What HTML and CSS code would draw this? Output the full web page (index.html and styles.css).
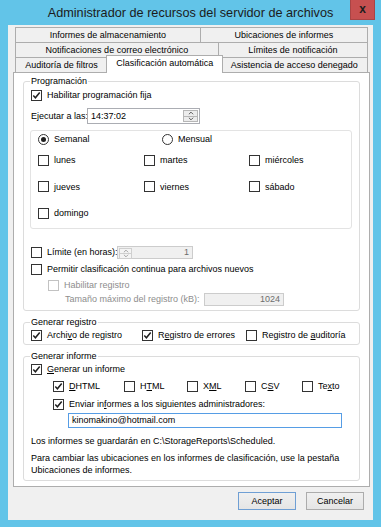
FILE: index.html
```html
<!DOCTYPE html>
<html lang="es">
<head>
  <meta charset="UTF-8">
  <meta name="viewport" content="width=device-width, initial-scale=1.0">
  <title>Administrador de recursos del servidor de archivos</title>
  <link rel="stylesheet" href="styles.css">
</head>
<body>

  <div class="window">
    <div class="titlebar">
      <span class="title">Administrador de recursos del servidor de archivos</span>
      <button class="close-btn" aria-label="Cerrar">x</button>
    </div>

    <div class="client">

      <!-- Tabs -->
      <div class="tabs">
        <div class="tab-row">
          <div class="tab">Informes de almacenamiento</div>
          <div class="tab">Ubicaciones de informes</div>
        </div>
        <div class="tab-row">
          <div class="tab">Notificaciones de correo electrónico</div>
          <div class="tab">Límites de notificación</div>
        </div>
        <div class="tab-row">
          <div class="tab">Auditoría de filtros</div>
          <div class="tab active">Clasificación automática</div>
          <div class="tab">Asistencia de acceso denegado</div>
        </div>
      </div>

      <div class="panel">

        <!-- Programación -->
        <fieldset class="group">
          <legend>Programación</legend>

          <label class="row row-enable">
            <span class="cb on"><svg viewBox="0 0 9 9"><path d="M1.3 4.6l2.1 2.2 4.3-5.3"/></svg></span>
            <span>Habilitar programación fija</span>
          </label>

          <div class="row row-time">
            <span class="time-label">Ejecutar a las:</span>
            <div class="spin time">
              <span class="spin-value">14:37:02</span>
              <span class="spin-btns">
                <span><svg viewBox="0 0 7 4"><path d="M1 3.5l2.5-2.5 2.5 2.5"/></svg></span>
                <span><svg viewBox="0 0 7 4"><path d="M1 .5l2.5 2.5 2.5-2.5"/></svg></span>
              </span>
            </div>
          </div>

          <div class="days-box">
            <div class="row radio-row">
              <label class="radio-item"><span class="rb on"></span><span>Semanal</span></label>
              <label class="radio-item"><span class="rb"></span><span>Mensual</span></label>
            </div>
            <div class="days">
              <label class="row"><span class="cb"></span><span>lunes</span></label>
              <label class="row"><span class="cb"></span><span>martes</span></label>
              <label class="row"><span class="cb"></span><span>miércoles</span></label>
              <label class="row"><span class="cb"></span><span>jueves</span></label>
              <label class="row"><span class="cb"></span><span>viernes</span></label>
              <label class="row"><span class="cb"></span><span>sábado</span></label>
              <label class="row"><span class="cb"></span><span>domingo</span></label>
            </div>
          </div>

          <div class="row row-limit">
            <span class="cb"></span>
            <span class="limit-label">Límite (en horas):</span>
            <div class="spin limit disabled">
              <span class="spin-btns">
                <span><svg viewBox="0 0 7 4"><path d="M1 3.5l2.5-2.5 2.5 2.5"/></svg></span>
                <span><svg viewBox="0 0 7 4"><path d="M1 .5l2.5 2.5 2.5-2.5"/></svg></span>
              </span>
              <span class="spin-value num">1</span>
            </div>
          </div>

          <label class="row row-continuous">
            <span class="cb"></span>
            <span>Permitir clasificación continua para archivos nuevos</span>
          </label>

          <label class="row row-log disabled-text">
            <span class="cb off"></span>
            <span>Habilitar registro</span>
          </label>

          <div class="row row-size disabled-text">
            <span class="size-label">Tamaño máximo del registro (kB):</span>
            <span class="textbox size">1024</span>
          </div>
        </fieldset>

        <!-- Generar registro -->
        <fieldset class="group group-log">
          <legend>Generar registro</legend>
          <div class="row log-row">
            <label class="log-item"><span class="cb on"><svg viewBox="0 0 9 9"><path d="M1.3 4.6l2.1 2.2 4.3-5.3"/></svg></span><span>Archi<u>v</u>o de registro</span></label>
            <label class="log-item"><span class="cb on"><svg viewBox="0 0 9 9"><path d="M1.3 4.6l2.1 2.2 4.3-5.3"/></svg></span><span>R<u>e</u>gistro de errores</span></label>
            <label class="log-item"><span class="cb"></span><span>Registro de <u>a</u>uditoría</span></label>
          </div>
        </fieldset>

        <!-- Generar informe -->
        <fieldset class="group">
          <legend>Generar informe</legend>

          <label class="row row-report">
            <span class="cb on"><svg viewBox="0 0 9 9"><path d="M1.3 4.6l2.1 2.2 4.3-5.3"/></svg></span>
            <span><u>G</u>enerar un informe</span>
          </label>

          <div class="row formats">
            <label class="fmt fmt-dhtml"><span class="cb on"><svg viewBox="0 0 9 9"><path d="M1.3 4.6l2.1 2.2 4.3-5.3"/></svg></span><span><u>D</u>HTML</span></label>
            <label class="fmt fmt-html"><span class="cb"></span><span>H<u>T</u>ML</span></label>
            <label class="fmt fmt-xml"><span class="cb"></span><span>X<u>M</u>L</span></label>
            <label class="fmt fmt-csv"><span class="cb"></span><span>C<u>S</u>V</span></label>
            <label class="fmt"><span class="cb"></span><span>Te<u>x</u>to</span></label>
          </div>

          <label class="row row-send">
            <span class="cb on"><svg viewBox="0 0 9 9"><path d="M1.3 4.6l2.1 2.2 4.3-5.3"/></svg></span>
            <span>Enviar in<u>f</u>ormes a los siguientes administradores:</span>
          </label>

          <div class="textbox email">kinomakino@hotmail.com</div>

          <p class="note note-path">Los informes se guardarán en C:\StorageReports\Scheduled.</p>
          <p class="note">Para cambiar las ubicaciones en los informes de clasificación, use la pestaña Ubicaciones de informes.</p>
        </fieldset>

      </div>

      <div class="buttons">
        <button class="btn default">Aceptar</button>
        <button class="btn">Cancelar</button>
      </div>

    </div>
  </div>

</body>
</html>
```

FILE: styles.css
```css
:root {
  --frame-color: #62c4e8;
  --face-color: #f0f0f0;
  --tab-border: #adadad;
  --group-border: #dcdcdc;
  --box-border: #abadb3;
  --disabled-text: #8d8d8d;
}

* {
  box-sizing: border-box;
}

body {
  margin: 0;
  font-family: "Liberation Sans", Arial, sans-serif;
  font-size: 9px;
  color: #000;
}

.window {
  width: 381px;
  height: 527px;
  background: var(--frame-color);
  padding: 0 8px 7px;
  display: flex;
  flex-direction: column;
  overflow: hidden;
}

/* Title bar */
.titlebar {
  flex: none;
  height: 25px;
  position: relative;
  display: flex;
  align-items: center;
  justify-content: center;
}

.title {
  font-size: 12.7px;
  color: #1b1b1b;
  margin-top: 1px;
}

.close-btn {
  position: absolute;
  top: 0;
  right: -2px;
  width: 25px;
  height: 20px;
  padding: 0;
  background: #c75050;
  border: 1px solid #a94444;
  border-top: none;
  color: #1e1e1e;
  font: bold 12px "Liberation Sans", Arial, sans-serif;
  line-height: 17px;
}

/* Client area */
.client {
  flex: 1;
  min-height: 0;
  background: var(--face-color);
  padding: 2px 3px 9px 5px;
  display: flex;
  flex-direction: column;
}

.tabs {
  flex: none;
  margin: 0 2px;
}

.tab-row {
  display: flex;
  height: 15px;
  align-items: flex-end;
}

.tab {
  flex: 1 1 auto;
  height: 15px;
  border: 1px solid var(--tab-border);
  border-bottom: none;
  margin-left: -1px;
  background: var(--face-color);
  text-align: center;
  line-height: 14px;
  white-space: nowrap;
}

.tab:first-child {
  margin-left: 0;
}

.tab.active {
  position: relative;
  z-index: 1;
  height: 18px;
  margin: 0 -2px -1px;
  background: #fff;
  line-height: 14px;
  padding-bottom: 4px;
}

.panel {
  flex: none;
  background: #fff;
  border: 1px solid var(--tab-border);
  padding: 2px 9px 5px;
}

/* Group boxes */
.group {
  border: 1px solid var(--group-border);
  border-radius: 3px;
  margin: 0;
  padding: 0 7px 4px;
  min-width: 0;
}

.group + .group {
  margin-top: 5px;
}

.group-log {
  padding-bottom: 2px;
}

.group legend {
  padding: 0 1px;
  margin-left: -1px;
  line-height: 12px;
}

.row {
  display: flex;
  align-items: center;
  height: 14px;
  white-space: nowrap;
}

/* Check boxes and radio buttons */
.cb {
  flex: none;
  width: 11px;
  height: 11px;
  border: 1px solid #333;
  background: #fff;
  margin-right: 5px;
  display: inline-flex;
  align-items: center;
  justify-content: center;
}

.cb svg {
  width: 9px;
  height: 9px;
  fill: none;
  stroke: #1f1f1f;
  stroke-width: 1.5;
}

.cb.off {
  border-color: #c2c2c2;
}

.rb {
  flex: none;
  width: 11px;
  height: 11px;
  border: 1px solid #333;
  border-radius: 50%;
  background: #fff;
  margin-right: 5px;
  display: inline-flex;
  align-items: center;
  justify-content: center;
}

.rb.on::after {
  content: "";
  width: 5px;
  height: 5px;
  border-radius: 50%;
  background: #1f1f1f;
}

label {
  display: flex;
  align-items: center;
}

/* Programación rows */
.row-enable {
  margin-top: 1px;
}

.row-time {
  margin-top: 6px;
  height: 16px;
}

.time-label {
  width: 56px;
}

.spin {
  display: flex;
  border: 1px solid var(--box-border);
  background: #fff;
}

.spin.time {
  width: 113px;
  height: 16px;
}

.spin-value {
  flex: 1;
  padding-left: 3px;
  line-height: 14px;
}

.spin-value.num {
  text-align: right;
  padding-right: 3px;
  line-height: 11px;
}

.spin-btns {
  flex: none;
  width: 17px;
  padding: 1px;
  display: flex;
  flex-direction: column;
}

.spin-btns span {
  flex: 1;
  border: 1px solid #b6b6b6;
  background: #ececec;
  display: flex;
  align-items: center;
  justify-content: center;
}

.spin-btns span + span {
  margin-top: -1px;
}

.spin-btns svg {
  width: 6px;
  height: 4px;
  fill: none;
  stroke: #444;
  stroke-width: 1;
}

.days-box {
  margin: 6px 0 0 -1px;
  border: 1px solid #e3e3e3;
  border-radius: 3px;
  padding: 1px 7px 8px;
}

.radio-item {
  width: 124px;
}

.days {
  margin-top: 7px;
  display: grid;
  grid-template-columns: 106px 105px 1fr;
  row-gap: 12.5px;
}

.row-limit {
  margin-top: 16px;
}

.limit-label {
  width: 70px;
}

.spin.limit {
  width: 76px;
  height: 13px;
  border-color: #cccccc;
  background: #f0f0f0;
  color: #6d6d6d;
}

.spin.limit .spin-btns {
  width: 15px;
}

.spin.limit .spin-btns span {
  border-color: #cfcfcf;
  background: #f4f4f4;
}

.spin.limit .spin-btns svg {
  stroke: #9a9a9a;
}

.row-continuous {
  margin-top: 3px;
}

.row-log {
  margin-top: 2px;
  padding-left: 17px;
}

.disabled-text {
  color: var(--disabled-text);
}

.row-size {
  padding-left: 34px;
}

.size-label {
  width: 139px;
}

.textbox {
  border: 1px solid var(--box-border);
  background: #fff;
  padding: 0 3px;
}

.textbox.size {
  width: 80px;
  height: 13px;
  line-height: 11px;
  text-align: right;
  border-color: #cccccc;
  background: #f0f0f0;
  color: #6d6d6d;
}

/* Generar registro */
.log-item:nth-child(1) {
  width: 111px;
}

.log-item:nth-child(2) {
  width: 104px;
}

/* Generar informe */
.formats {
  margin-top: 3px;
  padding-left: 22px;
}

.fmt-dhtml {
  width: 71px;
}

.fmt-html {
  width: 63px;
}

.fmt-xml {
  width: 58px;
}

.fmt-csv {
  width: 57px;
}

.row-send {
  margin-top: 4px;
  padding-left: 22px;
}

.textbox.email {
  margin: 2px 0 0 37px;
  width: 274px;
  height: 15px;
  line-height: 13px;
  border-color: #569de5;
}

.note {
  margin: 5px 0 0;
  line-height: 12px;
}

.note-path {
  margin-top: 7px;
}

u {
  text-decoration-thickness: 1px;
  text-underline-offset: 1px;
}

/* Dialog buttons */
.buttons {
  flex: none;
  margin-top: 5px;
  padding-right: 6px;
  display: flex;
  justify-content: flex-end;
  gap: 10px;
}

.btn {
  width: 58px;
  height: 18px;
  padding: 0;
  border: 1px solid #acacac;
  background: linear-gradient(#f0f0f0, #e5e5e5);
  font: inherit;
  color: #000;
}

.btn.default {
  border-color: #6f9fd4;
}
```
